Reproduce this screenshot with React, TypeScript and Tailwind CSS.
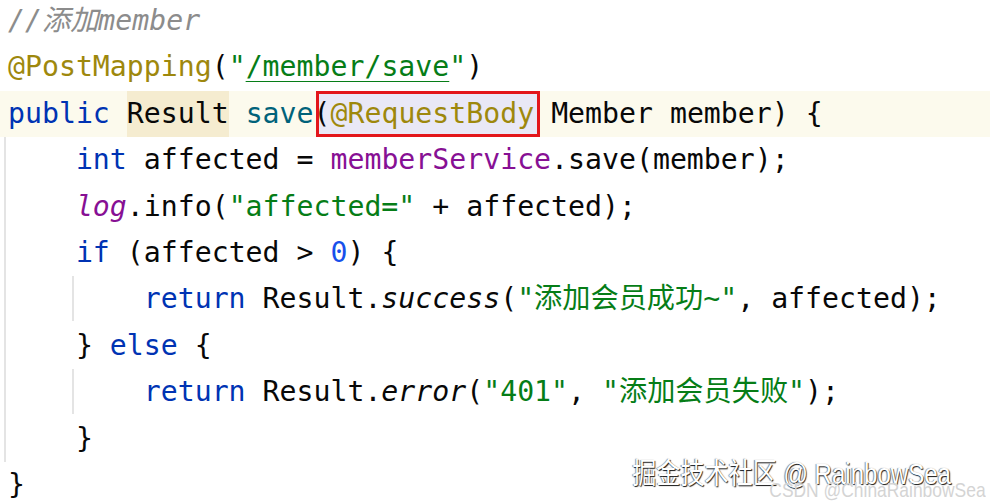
const mono = "font-['DejaVu_Sans_Mono','Noto_Sans_CJK_SC',monospace]";

const K = ({ children }: { children: React.ReactNode }) => <span className="text-[#0033b3]">{children}</span>;
const S = ({ children }: { children: React.ReactNode }) => <span className="text-[#067d17]">{children}</span>;
const A = ({ children }: { children: React.ReactNode }) => <span className="text-[#9e880d]">{children}</span>;

function Line({ children, current }: { children?: React.ReactNode; current?: boolean }) {
  return (
    <div className={`h-[46.4px] leading-[46.4px] pl-[8px] whitespace-pre ${current ? "bg-[#fcfaed]" : ""}`}>
      {children}
    </div>
  );
}

export default function App() {
  return (
    <div className="relative w-[990px] h-[504px] overflow-hidden bg-white">
      <div className={`${mono} text-[28.2px] text-[#080808] -mt-[2px]`}>
        <Line>
          <span className="italic text-[#8c8c8c]">//添加member</span>
        </Line>
        <Line>
          <A>@PostMapping</A>(<S>"</S>
          <span className="text-[#067d17] underline decoration-1 underline-offset-[5px]">/member/save</span>
          <S>"</S>)
        </Line>
        <Line current>
          <K>public</K>{" "}
          <span className="inline-block h-full bg-[#f5ecd0]">Result</span>{" "}
          <span className="text-[#00627a]">save</span>
          <span className="relative inline-block h-full">
            <span className="absolute top-0 bottom-0 left-[2px] -right-[6px] border-[3px] border-[#e3161b] bg-[#e9e8f6]" />
            <span className="relative">
              (<A>@RequestBody</A>
            </span>
          </span>{" "}
          Member member) {"{"}
        </Line>
        <Line>
          {"    "}
          <K>int</K> affected = <span className="text-[#871094]">memberService</span>.save(member);
        </Line>
        <Line>
          {"    "}
          <span className="italic text-[#871094]">log</span>.info(<S>"affected="</S> + affected);
        </Line>
        <Line>
          {"    "}
          <K>if</K> (affected &gt; <span className="text-[#1750eb]">0</span>) {"{"}
        </Line>
        <Line>
          {"        "}
          <K>return</K> Result.<span className="italic">success</span>(<S>"添加会员成功~"</S>, affected);
        </Line>
        <Line>
          {"    "}
          {"}"} <K>else</K> {"{"}
        </Line>
        <Line>
          {"        "}
          <K>return</K> Result.<span className="italic">error</span>(<S>"401"</S>, <S>"添加会员失败"</S>);
        </Line>
        <Line>
          {"    "}
          {"}"}
        </Line>
        <Line>{"}"}</Line>
      </div>

      {/* indent guides */}
      <div className="absolute left-[4px] top-[137px] h-[325px] w-[2px] bg-[#e4e4e4]" />
      <div className="absolute left-[72px] top-[276px] h-[45px] w-[2px] bg-[#e4e4e4]" />
      <div className="absolute left-[72px] top-[369px] h-[45px] w-[2px] bg-[#e4e4e4]" />

      {/* watermarks */}
      <div className="absolute right-[4px] bottom-[3px] flex flex-col items-end font-['Liberation_Sans','Noto_Sans_CJK_SC',sans-serif]">
        <div className="origin-right scale-x-[0.83] text-[29px] leading-[32px] text-white [text-shadow:1px_1px_1px_rgba(0,0,0,0.9),-1px_0_1px_rgba(0,0,0,0.5)] mr-[35px]">
          掘金技术社区 @ RainbowSea
        </div>
        <div className="origin-right scale-x-[0.83] text-[21px] leading-[22px] text-[#d4d4d4] -mt-[11px]">
          CSDN @ChinaRainbowSea
        </div>
      </div>
    </div>
  );
}
